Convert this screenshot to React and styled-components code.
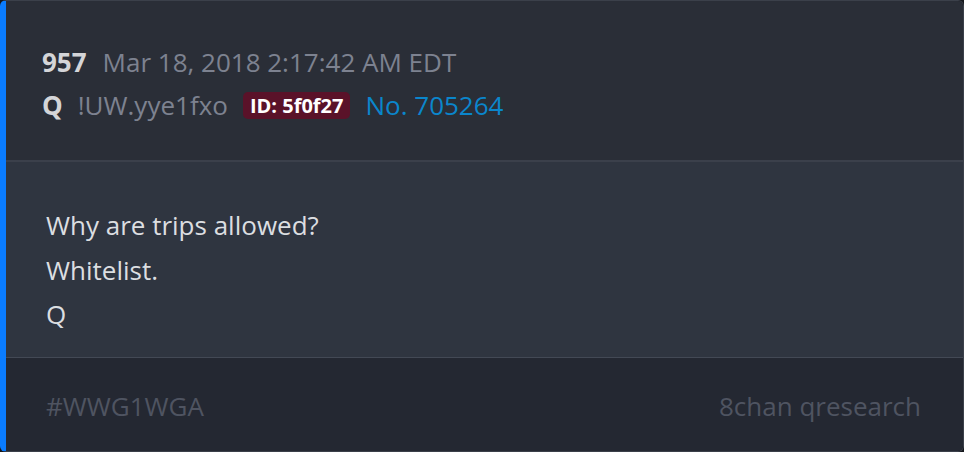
import React from "react";
import styled, { createGlobalStyle } from "styled-components";

const GlobalStyle = createGlobalStyle`
  html, body {
    margin: 0;
    padding: 0;
    background: #15171c;
  }
  * {
    box-sizing: border-box;
  }
`;

const post = {
  count: 957,
  date: "Mar 18, 2018 2:17:42 AM EDT",
  name: "Q",
  trip: "!UW.yye1fxo",
  id: "5f0f27",
  number: 705264,
  lines: ["Why are trips allowed?", "Whitelist.", "Q"],
  tag: "#WWG1WGA",
  source: "8chan qresearch",
};

function App() {
  return (
    <>
      <GlobalStyle />
      <Card>
        <Header>
          <MetaRow $gap={16}>
            <Strong>{post.count}</Strong>
            <Muted>{post.date}</Muted>
          </MetaRow>
          <MetaRow $gap={15}>
            <Strong>{post.name}</Strong>
            <Muted>{post.trip}</Muted>
            <IdBadge>ID: {post.id}</IdBadge>
            <PostLink>No. {post.number}</PostLink>
          </MetaRow>
        </Header>
        <Body>
          {post.lines.map((line, i) => (
            <Line key={i}>{line}</Line>
          ))}
        </Body>
        <Footer>
          <FooterText>{post.tag}</FooterText>
          <FooterText>{post.source}</FooterText>
        </Footer>
      </Card>
    </>
  );
}

export default App;

//styling via styled-components//

const Card = styled.div`
  height: 100vh;
  display: flex;
  flex-direction: column;
  overflow: hidden;
  border: 1px solid #3b404a;
  border-left: 6px solid #0a7cff;
  border-radius: 6px;
  font-family: "Open Sans", "Noto Sans", sans-serif;
  font-size: 26px;
`;

const Header = styled.div`
  background: #2a2e37;
  padding: 39px 36px 34px;
  border-bottom: 2px solid #3b404b;
`;

const MetaRow = styled.div`
  display: flex;
  align-items: center;
  gap: ${(p) => p.$gap}px;
  height: 43px;
  white-space: nowrap;
`;

const Strong = styled.span`
  color: #d4d5d8;
  font-weight: 700;
`;

const Muted = styled.span`
  color: #7d8290;
`;

const IdBadge = styled.span`
  display: inline-flex;
  align-items: center;
  height: 27px;
  padding: 0 7px;
  margin-top: 1px;
  border-radius: 5px;
  background: #5a1229;
  color: #ffffff;
  font-weight: 700;
  font-size: 20px;
`;

const PostLink = styled.span`
  color: #0a86cc;
`;

const Body = styled.div`
  background: #2f3540;
  padding: 41px 40px 20px;
  border-bottom: 1px solid #434955;
`;

const Line = styled.div`
  color: #dcdee1;
  line-height: 44.5px;
`;

const Footer = styled.div`
  flex: 1;
  background: #242832;
  display: flex;
  align-items: center;
  justify-content: space-between;
  padding: 3px 42px 0 40px;
`;

const FooterText = styled.span`
  color: #4f5461;
`;
